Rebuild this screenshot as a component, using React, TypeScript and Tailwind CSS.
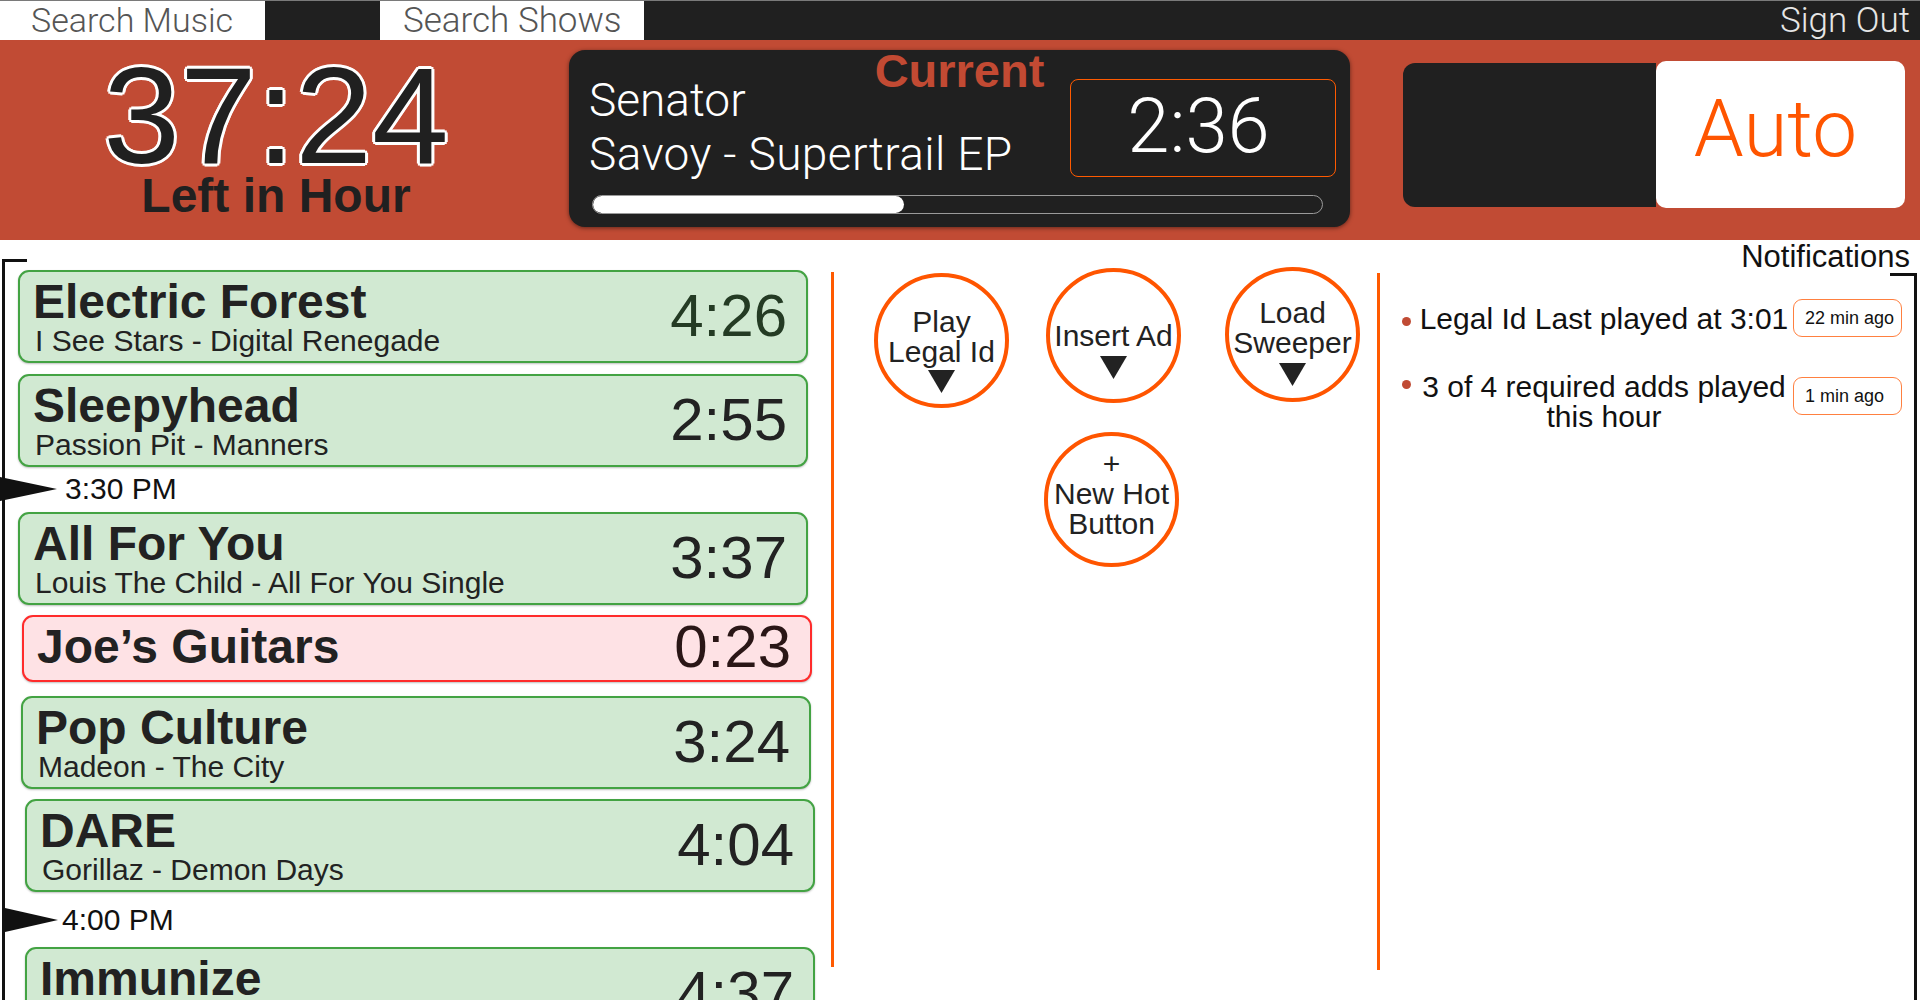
const SANS = "font-['Liberation_Sans',Arial,sans-serif]";
const LIGHT = "font-['Roboto','Liberation_Sans',sans-serif] font-light";

type Row =
  | { kind: 'song'; title: string; sub?: string; time: string; red?: boolean; cls: string; timeCls?: string }
  | { kind: 'marker'; time: string; cls: string; triCls: string; textCls: string };

const rows: Row[] = [
  { kind: 'song', title: 'Electric Forest', sub: 'I See Stars - Digital Renegade', time: '4:26', cls: 'mt-[8px] ml-[13px]', timeCls: 'text-[#243b24]' },
  { kind: 'song', title: 'Sleepyhead', sub: 'Passion Pit - Manners', time: '2:55', cls: 'mt-[11px] ml-[13px]' },
  { kind: 'marker', time: '3:30 PM', cls: 'mt-[7px] -ml-[5px]', triCls: 'w-[57px]', textCls: 'ml-[8px]' },
  { kind: 'song', title: 'All For You', sub: 'Louis The Child - All For You Single', time: '3:37', cls: 'mt-[8px] ml-[13px]' },
  { kind: 'song', title: 'Joe’s Guitars', time: '0:23', red: true, cls: 'mt-[10px] ml-[17px]', timeCls: 'text-[#2a1616]' },
  { kind: 'song', title: 'Pop Culture', sub: 'Madeon - The City', time: '3:24', cls: 'mt-[14px] ml-[16px]' },
  { kind: 'song', title: 'DARE', sub: 'Gorillaz - Demon Days', time: '4:04', cls: 'mt-[10px] ml-[20px]' },
  { kind: 'marker', time: '4:00 PM', cls: 'mt-[13px] ml-0', triCls: 'w-[53px]', textCls: 'ml-[4px]' },
  { kind: 'song', title: 'Immunize', sub: '\u00a0', time: '4:37', cls: 'mt-[12px] ml-[20px]' },
];

function DownArrow({ className }: { className: string }) {
  return (
    <svg viewBox="0 0 27 23" className={`block w-[27px] h-[23px] ${className}`}>
      <polygon points="0,0 27,0 13.5,23" fill="#222" />
    </svg>
  );
}

function HotButton({ lines, arrow, className, arrowCls = '' }: { lines: string[]; arrow?: boolean; className: string; arrowCls?: string }) {
  return (
    <button
      className={`w-[135px] h-[135px] shrink-0 rounded-full border-[4px] border-[#ff5500] bg-white flex flex-col items-center text-[30px] leading-[30px] text-[#222] whitespace-nowrap ${className}`}
    >
      {lines.map((l) => (
        <span key={l}>{l}</span>
      ))}
      {arrow && <DownArrow className={arrowCls} />}
    </button>
  );
}

function SongCard({ row }: { row: Extract<Row, { kind: 'song' }> }) {
  const tone = row.red
    ? 'h-[67px] pb-[4px] border-[#ff2b2b] bg-[#fee2e5]'
    : 'pt-[8px] pb-[5px] border-[#43a343] bg-[#d1e9d2]';
  return (
    <div
      className={`w-[790px] flex items-center justify-between rounded-[11px] border-2 pl-[13px] pr-[19px] shadow-[0_1px_2px_rgba(0,0,0,0.25)] ${tone} ${row.cls}`}
    >
      <div className="flex flex-col text-[#222]">
        <span className="text-[48px] leading-[44px] font-bold">{row.title}</span>
        {row.sub && <span className="mt-[2px] ml-[2px] text-[30px] leading-[30px]">{row.sub}</span>}
      </div>
      <span className={`text-[60px] leading-none ${row.red ? '' : 'mb-[4px]'} ${row.timeCls ?? 'text-[#222]'}`}>{row.time}</span>
    </div>
  );
}

function Marker({ row }: { row: Extract<Row, { kind: 'marker' }> }) {
  return (
    <div className={`flex items-center h-[30px] ${row.cls}`}>
      <svg viewBox="0 0 57 24" preserveAspectRatio="none" className={`block h-[24px] ${row.triCls}`}>
        <polygon points="0,0 57,12 0,24" fill="#111" />
      </svg>
      <span className={`text-[30px] leading-[30px] text-[#111] ${row.textCls}`}>{row.time}</span>
    </div>
  );
}

export default function App() {
  return (
    <div className={`w-[1920px] h-[1000px] overflow-hidden bg-white ${SANS}`}>
      {/* top bar */}
      <div className="h-[40px] flex bg-[#202020] border-t border-[#7a7a7a]">
        <button className={`w-[265px] h-full bg-white text-left pl-[31px] text-[34px] leading-[39px] text-[#555] ${LIGHT}`}>
          Search Music
        </button>
        <button className={`ml-[115px] w-[264px] h-full bg-white text-left pl-[23px] text-[35px] leading-[39px] text-[#555] ${LIGHT}`}>
          Search Shows
        </button>
        <button className={`ml-auto pr-[10px] text-[35px] leading-[39px] text-[#e6e6e6] ${LIGHT}`}>Sign Out</button>
      </div>

      {/* header band */}
      <div className="h-[200px] flex items-start bg-[#c14b34]">
        <div className="w-[552px] shrink-0 flex flex-col items-center pt-[6px] text-[#202020]">
          <div className="text-[138px] leading-none [text-shadow:3px_0_0_#fff,-3px_0_0_#fff,0_3px_0_#fff,0_-3px_0_#fff,2px_2px_0_#fff,-2px_2px_0_#fff,2px_-2px_0_#fff,-2px_-2px_0_#fff]">
            37:24
          </div>
          <div className="-mt-[12px] text-[48px] leading-none font-bold">Left in Hour</div>
        </div>

        <div className="relative shrink-0 mt-[10px] ml-[17px] w-[781px] h-[177px] rounded-[16px] bg-[#202020] shadow-[0_1px_4px_rgba(0,0,0,0.5)]">
          <div className="absolute left-0 right-0 top-[-3px] text-center text-[47px] leading-none font-bold text-[#c24a33]">
            Current
          </div>
          <div className="flex pt-[27px] pr-[14px]">
            <div className={`flex-1 pl-[20px] text-white ${LIGHT}`}>
              <div className="text-[46px] leading-none">Senator</div>
              <div className="mt-[8px] text-[46px] leading-none tracking-[0.4px]">Savoy - Supertrail EP</div>
            </div>
            <div className="mt-[2px] w-[266px] h-[98px] rounded-[8px] border-[1.5px] border-[#ff5a00] flex items-center justify-center pb-[4px] pr-[9px]">
              <span className={`text-[76px] leading-none text-white ${LIGHT}`}>2:36</span>
            </div>
          </div>
          <div className="ml-[23px] mt-[18px] w-[731px] h-[19px] rounded-full border border-[#9a9a9a] overflow-hidden">
            <div className="h-full w-[311px] rounded-full bg-white" />
          </div>
        </div>

        <div className="shrink-0 mt-[23px] ml-[53px] w-[253px] h-[144px] rounded-l-[12px] bg-[#202020]" />
        <div className={`shrink-0 mt-[21px] w-[249px] h-[147px] rounded-[10px] bg-white flex items-center justify-center pb-[12px] pr-[10px] text-[80px] leading-none text-[#ff5500] ${LIGHT}`}>
          Auto
        </div>
      </div>

      {/* content */}
      <div className="flex h-[760px]">
        {/* playlist */}
        <div className="w-[831px] shrink-0 pt-[19px] pl-[2px]">
          <div className="h-full border-l-[3px] border-[#111]">
            <div className="-ml-[3px] w-[25px] h-[3px] bg-[#111]" />
            {rows.map((r, i) =>
              r.kind === 'song' ? <SongCard key={i} row={r} /> : <Marker key={i} row={r} />
            )}
          </div>
        </div>

        <div className="shrink-0 mt-[32px] h-[695px] w-[3px] bg-[#ff5a00]" />

        {/* hot buttons */}
        <div className="w-[543px] shrink-0 pl-[40px] flex flex-col">
          <div className="flex items-start">
            <HotButton className="mt-[33px] pt-[30px]" lines={['Play', 'Legal Id']} arrow arrowCls="mt-[3px]" />
            <HotButton className="mt-[28px] ml-[37px] pt-[49px]" lines={['Insert Ad']} arrow arrowCls="mt-[5px]" />
            <HotButton className="mt-[27px] ml-[44px] pt-[27px]" lines={['Load', 'Sweeper']} arrow arrowCls="mt-[5px]" />
          </div>
          <HotButton className="mt-[24px] ml-[170px] pt-[13px]" lines={['+', 'New Hot', 'Button']} />
        </div>

        <div className="shrink-0 mt-[33px] h-[697px] w-[3px] bg-[#ff5a00]" />

        {/* notifications */}
        <div className="flex-1 min-w-0 flex flex-col">
          <div className="mt-[2px] h-[30px] pr-[10px] text-right text-[31px] leading-[30px] text-[#111]">Notifications</div>
          <div className="flex flex-1 mt-[1px]">
            <div className="flex-1 min-w-0 pl-[22px] pt-[26px] flex flex-col text-[#111]">
              <div className="flex items-start">
                <span className="shrink-0 mt-[18px] w-[9px] h-[9px] rounded-full bg-[#c04b34]" />
                <span className="shrink-0 ml-[6px] mt-[5px] w-[374px] text-center text-[30px] leading-[30px]">
                  Legal Id Last played at 3:01
                </span>
                <span className="shrink-0 ml-[2px] w-[109px] h-[38px] flex items-center pl-[11px] rounded-[9px] border-[1.5px] border-[#ff8040] text-[18px]">
                  22 min ago
                </span>
              </div>
              <div className="mt-[35px] flex items-start">
                <span className="shrink-0 mt-[8px] w-[9px] h-[9px] rounded-full bg-[#c04b34]" />
                <span className="shrink-0 ml-[6px] w-[374px] text-center text-[30px] leading-[30px]">
                  3 of 4 required adds played this hour
                </span>
                <span className="shrink-0 ml-[2px] mt-[5px] w-[109px] h-[38px] flex items-center pl-[11px] rounded-[9px] border-[1.5px] border-[#ff8040] text-[18px]">
                  1 min ago
                </span>
              </div>
            </div>
            <div className="shrink-0 -ml-[27px] mr-[3px] w-[27px] border-t-[3px] border-r-[3px] border-[#111]" />
          </div>
        </div>
      </div>
    </div>
  );
}
